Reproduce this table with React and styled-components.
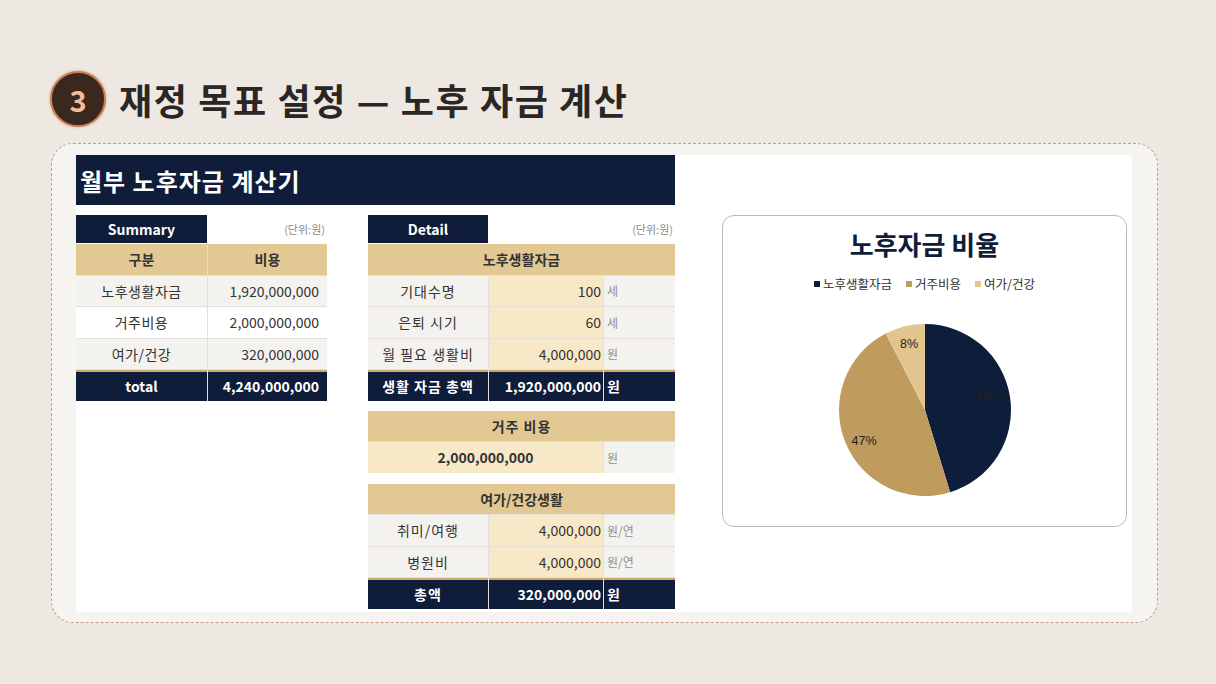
import React from 'react'
import styled, { createGlobalStyle } from 'styled-components'

const NAVY = '#0f1d3a'
const TAN = '#e2c994'
const CREAM = '#f7e8c8'
const PALE = '#f4f2ee'
const LINE = '#e4dfd8'
const GOLD = '#c9a86c'

const GlobalStyle = createGlobalStyle`
  html, body { margin: 0; padding: 0; }
  body {
    background: #ede8e2;
    font-family: "Noto Sans CJK KR", "Noto Sans", sans-serif;
    width: 1216px;
    height: 684px;
    overflow: hidden;
  }
`

const Page = styled.div`
  padding: 70px 0 0 50px;
`

const Heading = styled.div`
  display: flex;
  align-items: center;
  gap: 13px;
  height: 57px;
`

const Badge = styled.div`
  width: 52px;
  height: 52px;
  border-radius: 50%;
  background: #3a281f;
  border: 2px solid #c97c50;
  box-shadow: 0 0 3px rgba(201, 124, 80, 0.6);
  display: flex;
  align-items: center;
  justify-content: center;
  color: #f1bc9c;
  font-size: 29px;
  font-weight: 700;
`

const Title = styled.h1`
  margin: 0;
  font-size: 36px;
  font-weight: 700;
  color: #2a2624;
  letter-spacing: 1.6px;
`

const Card = styled.div`
  margin: 16px 0 0 1px;
  width: 1107px;
  height: 480px;
  box-sizing: border-box;
  border: 1.5px dashed #c69a86;
  border-radius: 22px;
  background: #f6f4f0;
  padding: 11px 25px 10px 24px;
`

const Sheet = styled.div`
  background: #fff;
  height: 457px;
`

const Banner = styled.div`
  width: 599px;
  height: 50px;
  background: ${NAVY};
  color: #fff;
  font-size: 24px;
  font-weight: 700;
  letter-spacing: 1px;
  display: flex;
  align-items: center;
  padding-left: 4px;
  box-sizing: border-box;
`

const Body = styled.div`
  display: flex;
  align-items: flex-start;
  margin-top: 10px;
`

const Column = styled.div`
  width: ${p => p.$w}px;
  margin-right: ${p => p.$mr || 0}px;
`

const Caption = styled.div`
  display: flex;
  justify-content: space-between;
  align-items: center;
  height: 28px;
  margin-bottom: 1px;
`

const CaptionCell = styled.div`
  width: ${p => p.$w}px;
  height: 100%;
  background: ${NAVY};
  color: #fff;
  font-weight: 700;
  font-size: 14px;
  display: flex;
  align-items: center;
  justify-content: center;
`

const UnitNote = styled.span`
  font-size: 11px;
  color: #8c8c8c;
  padding-right: 2px;
`

const Grid = styled.div`
  display: grid;
  grid-template-columns: ${p => p.$cols};
  grid-auto-rows: 30.5px;
  gap: 1px;
  background: ${LINE};
  margin-top: ${p => p.$mt || 0}px;
`

const Cell = styled.div`
  grid-column: ${p => p.$span || 'auto'};
  background: ${p => p.$bg || '#fff'};
  color: ${p => p.$color || '#333'};
  font-size: ${p => p.$size || 14}px;
  font-weight: ${p => (p.$bold ? 700 : 400)};
  letter-spacing: ${p => p.$ls || 0}px;
  display: flex;
  align-items: center;
  justify-content: ${p => p.$align || 'center'};
  padding: 0 ${p => p.$pad || 0}px;
  box-sizing: border-box;
  white-space: nowrap;
`

const TotalCell = styled(Cell)`
  background: ${NAVY};
  color: #fff;
  font-weight: 700;
  border-top: 2px solid ${GOLD};
`

const ChartBox = styled.div`
  width: 405px;
  height: 312px;
  box-sizing: border-box;
  border: 1.5px solid #b8b8b8;
  border-radius: 12px;
  background: #fff;
  display: flex;
  flex-direction: column;
  align-items: center;
`

const ChartTitle = styled.div`
  margin-top: 12px;
  font-size: 26px;
  font-weight: 700;
  color: ${NAVY};
  line-height: 32px;
`

const Legend = styled.div`
  display: flex;
  gap: 14px;
  margin-top: 16px;
  font-size: 12.5px;
  line-height: 16px;
  color: #333;
`

const LegendItem = styled.span`
  display: flex;
  align-items: center;
  gap: 3px;
`

const Swatch = styled.span`
  width: 6px;
  height: 6px;
  background: ${p => p.$c};
`

const PieSvg = styled.svg`
  margin-top: 28px;
  display: block;
`

const slices = [
  { name: '노후생활자금', value: 1920000000, color: '#0e1d3a', label: [63, -12] },
  { name: '거주비용', value: 2000000000, color: '#bf9b5d', label: [-61, 32] },
  { name: '여가/건강', value: 320000000, color: '#e2c48e', label: [-16, -65] },
]

function Pie() {
  const total = slices.reduce((s, x) => s + x.value, 0)
  const r = 86
  const c = 90
  let a = -Math.PI / 2
  return (
    <PieSvg width="180" height="180" viewBox="0 0 180 180">
      {slices.map(s => {
        const frac = s.value / total
        const a2 = a + frac * Math.PI * 2
        const x1 = c + r * Math.cos(a)
        const y1 = c + r * Math.sin(a)
        const x2 = c + r * Math.cos(a2)
        const y2 = c + r * Math.sin(a2)
        const large = frac > 0.5 ? 1 : 0
        a = a2
        return (
          <path
            key={s.name}
            d={`M${c} ${c} L${x1} ${y1} A${r} ${r} 0 ${large} 1 ${x2} ${y2} Z`}
            fill={s.color}
          />
        )
      })}
      {slices.map(s => (
        <text
          key={s.name + 'l'}
          x={c + s.label[0]}
          y={c + s.label[1]}
          fontSize="12.5"
          fill="#222"
          textAnchor="middle"
          dominantBaseline="middle"
          fontFamily="Liberation Sans, Arial, sans-serif"
        >
          {Math.round((s.value / total) * 100)}%
        </text>
      ))}
    </PieSvg>
  )
}

function Summary() {
  const rows = [
    ['노후생활자금', '1,920,000,000', PALE],
    ['거주비용', '2,000,000,000', '#fff'],
    ['여가/건강', '320,000,000', PALE],
  ]
  return (
    <Column $w={251} $mr={41}>
      <Caption>
        <CaptionCell $w={131}>Summary</CaptionCell>
        <UnitNote>(단위:원)</UnitNote>
      </Caption>
      <Grid $cols="131px 119px">
        <Cell $bg={TAN} $bold>구분</Cell>
        <Cell $bg={TAN} $bold>비용</Cell>
        {rows.map(([k, v, bg]) => (
          <React.Fragment key={k}>
            <Cell $bg={bg} $ls={0.5}>{k}</Cell>
            <Cell $bg={bg} $align="flex-end" $pad={8}>{v}</Cell>
          </React.Fragment>
        ))}
        <TotalCell>total</TotalCell>
        <TotalCell $align="flex-end" $pad={8}>4,240,000,000</TotalCell>
      </Grid>
    </Column>
  )
}

function DetailRow({ label, value, unit }) {
  return (
    <>
      <Cell $bg={PALE} $ls={1}>{label}</Cell>
      <Cell $bg={CREAM} $align="flex-end" $pad={2}>{value}</Cell>
      <Cell $bg={PALE} $align="flex-start" $pad={3} $color="#8f8f8f" $size={12}>{unit}</Cell>
    </>
  )
}

function TotalRow({ label, value }) {
  return (
    <>
      <TotalCell $ls={1}>{label}</TotalCell>
      <TotalCell $align="flex-end" $pad={2}>{value}</TotalCell>
      <TotalCell $align="flex-start" $pad={3}>원</TotalCell>
    </>
  )
}

const COLS = '120px 114px 71px'

function Detail() {
  return (
    <Column $w={307} $mr={47}>
      <Caption>
        <CaptionCell $w={120}>Detail</CaptionCell>
        <UnitNote>(단위:원)</UnitNote>
      </Caption>
      <Grid $cols={COLS}>
        <Cell $span="1 / -1" $bg={TAN} $bold>노후생활자금</Cell>
        <DetailRow label="기대수명" value="100" unit="세" />
        <DetailRow label="은퇴 시기" value="60" unit="세" />
        <DetailRow label="월 필요 생활비" value="4,000,000" unit="원" />
        <TotalRow label="생활 자금 총액" value="1,920,000,000" />
      </Grid>
      <Grid $cols={COLS} $mt={10}>
        <Cell $span="1 / -1" $bg={TAN} $bold $ls={1}>거주 비용</Cell>
        <Cell $span="1 / 3" $bg={CREAM} $bold>2,000,000,000</Cell>
        <Cell $bg={PALE} $align="flex-start" $pad={3} $color="#8f8f8f" $size={12}>원</Cell>
      </Grid>
      <Grid $cols={COLS} $mt={11}>
        <Cell $span="1 / -1" $bg={TAN} $bold>여가/건강생활</Cell>
        <DetailRow label="취미/여행" value="4,000,000" unit="원/연" />
        <DetailRow label="병원비" value="4,000,000" unit="원/연" />
        <TotalRow label="총액" value="320,000,000" />
      </Grid>
    </Column>
  )
}

function Chart() {
  return (
    <ChartBox>
      <ChartTitle>노후자금 비율</ChartTitle>
      <Legend>
        {slices.map(s => (
          <LegendItem key={s.name}>
            <Swatch $c={s.color} />
            {s.name}
          </LegendItem>
        ))}
      </Legend>
      <Pie />
    </ChartBox>
  )
}

export default function App() {
  return (
    <>
      <GlobalStyle />
      <Page>
        <Heading>
          <Badge>3</Badge>
          <Title>재정 목표 설정 — 노후 자금 계산</Title>
        </Heading>
        <Card>
          <Sheet>
            <Banner>월부 노후자금 계산기</Banner>
            <Body>
              <Summary />
              <Detail />
              <Chart />
            </Body>
          </Sheet>
        </Card>
      </Page>
    </>
  )
}
